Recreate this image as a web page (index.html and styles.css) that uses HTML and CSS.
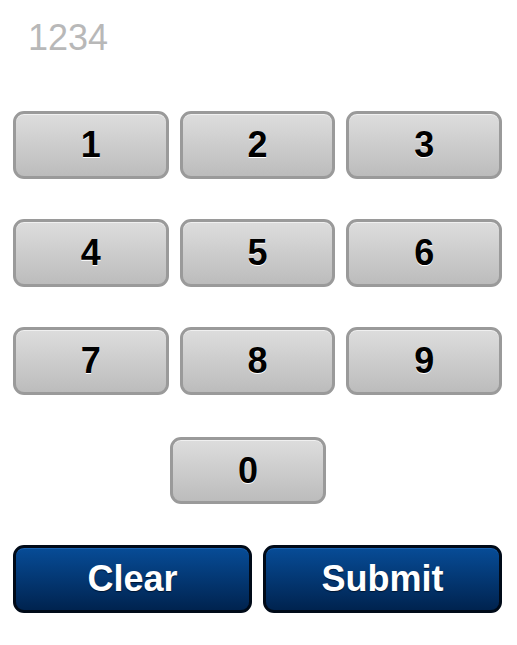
FILE: index.html
```html
<!DOCTYPE html>
<html>
<head>
<meta charset="utf-8">
<link rel="stylesheet" href="styles.css">
</head>
<body>
<div class="display">1234</div>
<div class="keypad">
  <button class="key">1</button>
  <button class="key">2</button>
  <button class="key">3</button>
  <button class="key">4</button>
  <button class="key">5</button>
  <button class="key">6</button>
  <button class="key">7</button>
  <button class="key">8</button>
  <button class="key">9</button>
</div>
<div class="zero-row">
  <button class="key">0</button>
</div>
<div class="actions">
  <button class="action">Clear</button>
  <button class="action">Submit</button>
</div>
</body>
</html>
```
FILE: styles.css
```css
html, body {
  margin: 0;
  padding: 0;
  background: #fff;
  font-family: "Liberation Sans", Arial, sans-serif;
}
.display {
  padding: 17px 0 0 28px;
  height: 94px;
  box-sizing: border-box;
  font-size: 36px;
  line-height: 42px;
  color: #b8b8b8;
}
.keypad {
  margin-top: 17px;
  width: 489px;
  margin-left: 13px;
  display: grid;
  grid-template-columns: 1fr 1fr 1fr;
  column-gap: 11px;
  row-gap: 40px;
}
.key {
  height: 68px;
  box-sizing: border-box;
  border: 3px solid #9a9a9a;
  border-radius: 11px;
  background: linear-gradient(#dddddd, #bcbcbc);
  box-shadow: inset 0 1px 0 #f0f0f0;
  font-family: "Liberation Sans", Arial, sans-serif;
  font-weight: bold;
  font-size: 36px;
  color: #000;
  text-shadow: 0 1px 0 #fff;
  padding: 0;
  margin: 0;
}
.zero-row {
  margin-top: 42px;
  padding-left: 170px;
  display: flex;
}
.zero-row .key {
  width: 156px;
  height: 67px;
}
.actions {
  margin-top: 41px;
  width: 489px;
  margin-left: 13px;
  display: grid;
  grid-template-columns: 1fr 1fr;
  column-gap: 11px;
}
.action {
  height: 68px;
  box-sizing: border-box;
  border: 3px solid #000a18;
  border-radius: 11px;
  background: linear-gradient(#074c97, #00234f);
  box-shadow: inset 0 1px 0 #1a62b0;
  font-family: "Liberation Sans", Arial, sans-serif;
  font-weight: bold;
  font-size: 36px;
  color: #fff;
  text-shadow: 0 1px 1px #00152f;
  padding: 0;
  margin: 0;
}
```
